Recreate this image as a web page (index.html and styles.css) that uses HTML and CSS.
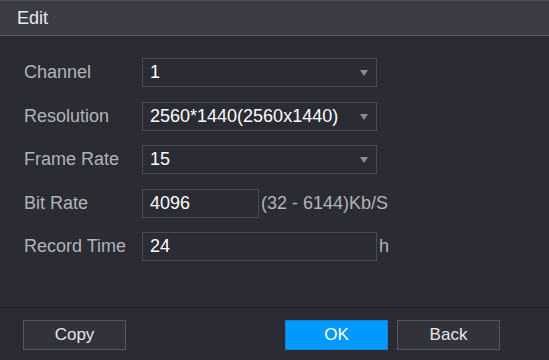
FILE: index.html
```html
<!DOCTYPE html>
<html lang="en">

<head>
    <meta charset="UTF-8">
    <title>Edit</title>
    <link rel="stylesheet" href="styles.css">
</head>

<body>
    <div class="dialog">
        <div class="dialog-title">Edit</div>
        <div class="dialog-body">
            <div class="row">
                <span class="label">Channel</span>
                <div class="select">1<span class="arrow"></span></div>
            </div>
            <div class="row">
                <span class="label">Resolution</span>
                <div class="select">2560*1440(2560x1440)<span class="arrow"></span></div>
            </div>
            <div class="row">
                <span class="label">Frame Rate</span>
                <div class="select">15<span class="arrow"></span></div>
            </div>
            <div class="row">
                <span class="label">Bit Rate</span>
                <div class="field short">4096</div>
                <span class="unit">(32 - 6144)Kb/S</span>
            </div>
            <div class="row">
                <span class="label">Record Time</span>
                <div class="field">24</div>
                <span class="unit">h</span>
            </div>
        </div>
        <div class="dialog-footer">
            <button class="btn">Copy</button>
            <span class="spacer"></span>
            <button class="btn btn-ok">OK</button>
            <button class="btn">Back</button>
        </div>
    </div>
</body>

</html>
```

FILE: styles.css
```css
body {
    margin: 0;
    padding: 0;
    background-color: #2a2b33;
    font-family: "Liberation Sans", Arial, sans-serif;
}

.dialog {
    width: 549px;
    height: 360px;
    display: flex;
    flex-direction: column;
    background-color: #2a2b33;
}

.dialog-title {
    height: 34px;
    line-height: 34px;
    padding-left: 17px;
    font-size: 18px;
    color: #e8e8ea;
    background-color: #3b3c45;
    border-top: 1px solid #4b4c55;
    border-bottom: 1px solid #5c5d65;
}

.dialog-body {
    flex: 1;
    padding-top: 22px;
}

.row {
    display: flex;
    align-items: center;
    height: 29px;
    margin-bottom: 14.5px;
}

.label {
    flex-shrink: 0;
    width: 142px;
    padding-left: 24px;
    box-sizing: border-box;
    white-space: nowrap;
    font-size: 18px;
    color: #b2b3b8;
}

.select,
.field {
    position: relative;
    flex-shrink: 0;
    width: 235px;
    height: 29px;
    box-sizing: border-box;
    border: 1px solid #4a4b54;
    padding-left: 7px;
    line-height: 27px;
    white-space: nowrap;
    font-size: 18px;
    color: #fff;
}

.field.short {
    width: 117px;
}

.arrow {
    position: absolute;
    right: 8px;
    top: 11px;
    width: 0;
    height: 0;
    border-left: 4.5px solid transparent;
    border-right: 4.5px solid transparent;
    border-top: 6px solid #8b8c93;
}

.unit {
    margin-left: 2px;
    white-space: nowrap;
    font-size: 18px;
    color: #b2b3b8;
}

.dialog-footer {
    display: flex;
    align-items: flex-start;
    height: 40px;
    padding: 12px 49px 0 23px;
    border-top: 1px solid #1c1d22;
}

.spacer {
    flex: 1;
}

.btn {
    flex-shrink: 0;
    width: 103px;
    height: 30px;
    margin: 0;
    padding: 0;
    font-family: "Liberation Sans", Arial, sans-serif;
    font-size: 17px;
    color: #e6e6e8;
    background-color: #31323a;
    border: 1px solid #55565e;
}

.btn-ok {
    margin-right: 9px;
    color: #fff;
    background-color: #0099ff;
    border-color: #1a80d6;
}
```
